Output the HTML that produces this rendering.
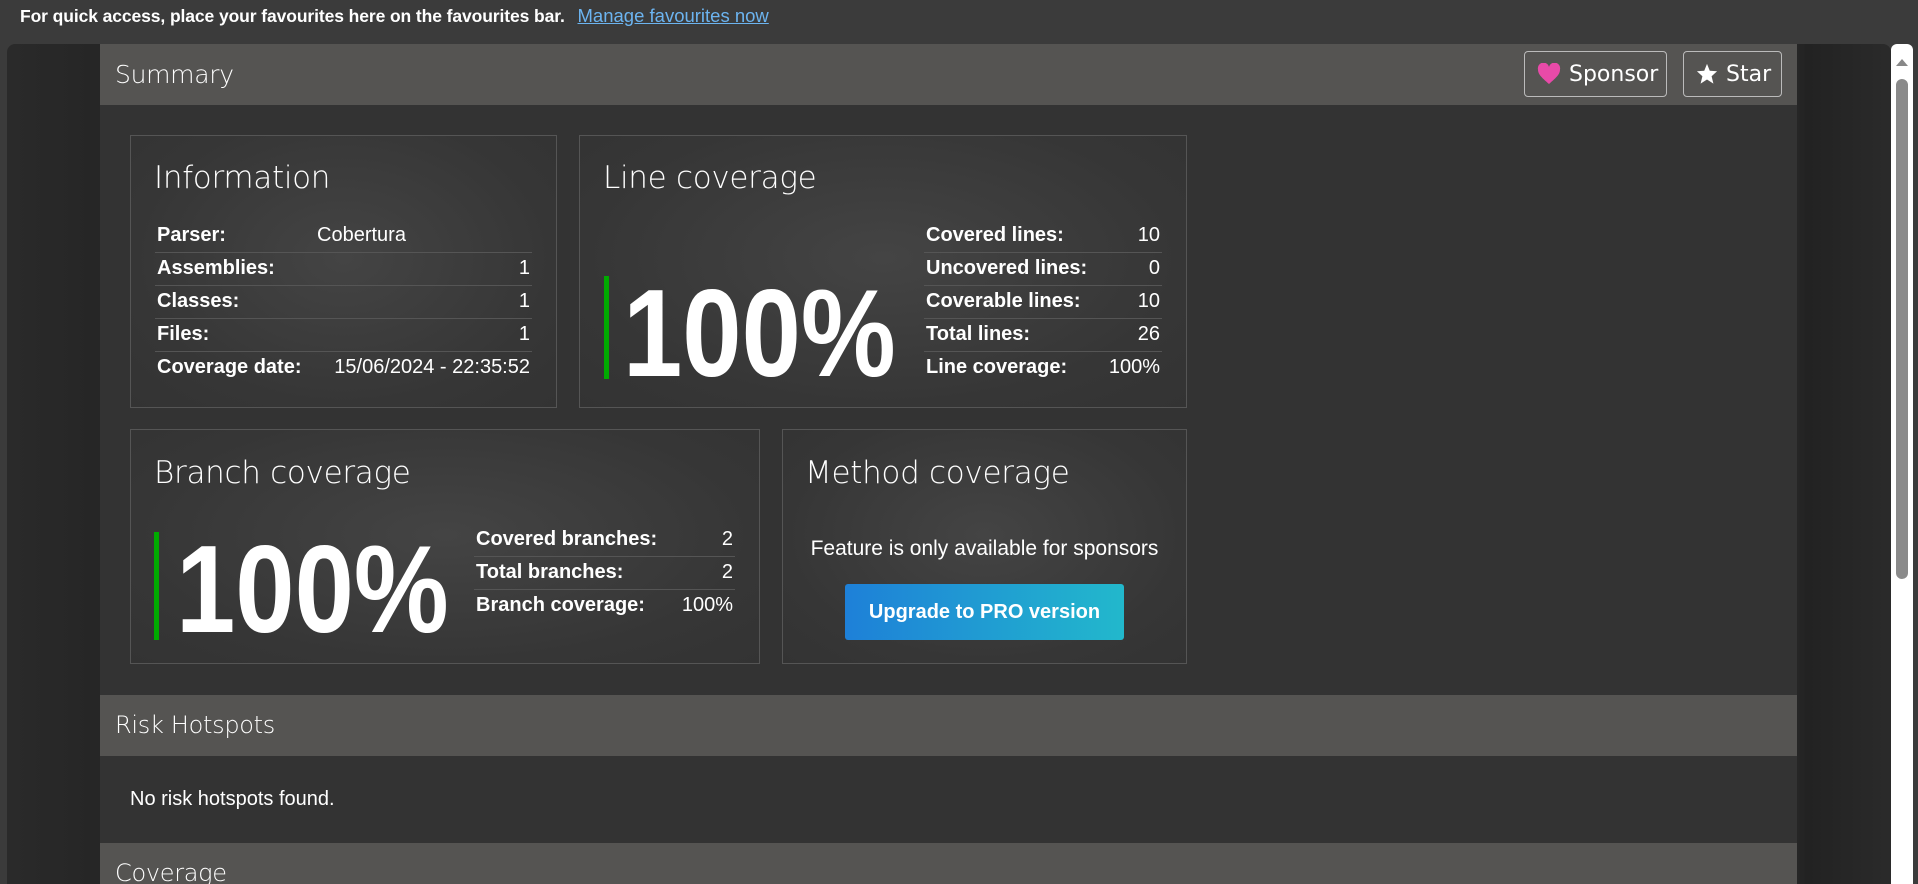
<!DOCTYPE html>
<html style="overflow:hidden"><head><meta charset="utf-8"><style>
*{margin:0;padding:0;box-sizing:border-box}
html,body{width:1918px;height:884px;overflow:hidden}
body{background:#3b3b3b;font-family:"Liberation Sans",Arial,sans-serif;color:#fff;position:relative}
.fav{position:absolute;left:20px;top:5px;font-size:17.5px;font-weight:bold;color:#fff;letter-spacing:-0.1px;white-space:nowrap}
.fav a{color:#6cb4f0;text-decoration:underline;margin-left:8px;font-weight:normal;font-size:18.5px;letter-spacing:0}
.outer{position:absolute;left:7px;top:44px;width:1884px;height:840px;background:linear-gradient(90deg,#2a2a2a 0,#262626 90px,#262626 1790px,#222 1800px,#2a2a2a 1880px);border-radius:8px 8px 0 0}
.main{position:absolute;left:100px;top:44px;width:1697px;height:840px;background:#333}
.hdr{position:absolute;left:100px;width:1697px;background:#555452;font-size:25px;padding-left:15px;font-family:"DejaVu Sans","Liberation Sans",sans-serif;font-weight:200;letter-spacing:-0.3px;overflow:hidden}
.btn{position:absolute;top:51px;height:46px;border:1px solid #bbb;border-radius:4px;font-size:22px;font-family:"DejaVu Sans",sans-serif;display:flex;align-items:center;padding-left:12px;gap:8px}
.box{position:absolute;border:1px solid #555;background:radial-gradient(ellipse at 50% 45%,#444 0,#363636 70%,#333 100%)}
.title{position:absolute;font-family:"DejaVu Sans","Liberation Sans",sans-serif;font-size:31px;font-weight:200;letter-spacing:-0.3px}
table{position:absolute;border-collapse:collapse;font-size:20px}
td{height:33px;padding:0 2px;border-top:1px solid #555;white-space:nowrap}
tr:first-child td{border-top:none}
td.l{font-weight:bold}
td.r{text-align:right}
.big{position:absolute;font-size:124px;font-weight:bold;transform:scaleX(0.86);transform-origin:left top;line-height:1}
.bar{position:absolute;width:5px;background:#0a0}
.scroll{position:absolute;left:1891px;top:44px;width:22px;height:840px;background:#fff;border-radius:6px 6px 0 0}
</style></head><body>
<div class="fav">For quick access, place your favourites here on the favourites bar. <a>Manage favourites now</a></div>
<div class="outer"></div>
<div class="main"></div>
<div class="hdr" style="top:44px;height:61px;line-height:61px">Summary</div>
<div class="btn" style="left:1524px;width:143px"><svg width="24" height="22" viewBox="0 0 24 22"><path d="M12 21 C4 14 1 11 1 6.5 A5.5 5.5 0 0 1 12 4 A5.5 5.5 0 0 1 23 6.5 C23 11 20 14 12 21Z" fill="#e84aa8"/></svg>Sponsor</div>
<div class="btn" style="left:1683px;width:99px"><svg width="22" height="22" viewBox="0 0 24 24"><path d="M12 1 L15 8.5 L23 9 L17 14.5 L19 22.5 L12 18 L5 22.5 L7 14.5 L1 9 L9 8.5Z" fill="#fff"/></svg>Star</div>

<div class="box" style="left:130px;top:135px;width:427px;height:273px"></div>
<div class="title" style="left:154px;top:160px">Information</div>
<table style="left:155px;top:219px;width:377px">
<tr><td class="l" style="width:160px">Parser:</td><td>Cobertura</td></tr>
<tr><td class="l">Assemblies:</td><td class="r">1</td></tr>
<tr><td class="l">Classes:</td><td class="r">1</td></tr>
<tr><td class="l">Files:</td><td class="r">1</td></tr>
<tr><td class="l">Coverage date:</td><td class="r">15/06/2024 - 22:35:52</td></tr>
</table>

<div class="box" style="left:579px;top:135px;width:608px;height:273px"></div>
<div class="title" style="left:603px;top:160px">Line coverage</div>
<div class="bar" style="left:604px;top:276px;height:103px"></div>
<div class="big" style="left:623px;top:272px">100%</div>
<table style="left:924px;top:219px;width:238px">
<tr><td class="l">Covered lines:</td><td class="r">10</td></tr>
<tr><td class="l">Uncovered lines:</td><td class="r">0</td></tr>
<tr><td class="l">Coverable lines:</td><td class="r">10</td></tr>
<tr><td class="l">Total lines:</td><td class="r">26</td></tr>
<tr><td class="l">Line coverage:</td><td class="r">100%</td></tr>
</table>

<div class="box" style="left:130px;top:429px;width:630px;height:235px"></div>
<div class="title" style="left:154px;top:455px">Branch coverage</div>
<div class="bar" style="left:154px;top:532px;height:108px"></div>
<div class="big" style="left:176px;top:528px">100%</div>
<table style="left:474px;top:523px;width:261px">
<tr><td class="l">Covered branches:</td><td class="r">2</td></tr>
<tr><td class="l">Total branches:</td><td class="r">2</td></tr>
<tr><td class="l">Branch coverage:</td><td class="r">100%</td></tr>
</table>

<div class="box" style="left:782px;top:429px;width:405px;height:235px"></div>
<div class="title" style="left:805px;top:455px">Method coverage</div>
<div style="position:absolute;left:782px;width:405px;top:537px;text-align:center;font-size:21px">Feature is only available for sponsors</div>
<div style="position:absolute;left:845px;top:584px;width:279px;height:56px;border-radius:3px;background:linear-gradient(90deg,#1e80d8,#22b8cc);font-weight:bold;font-size:20px;display:flex;align-items:center;justify-content:center">Upgrade to PRO version</div>

<div class="hdr" style="top:695px;height:61px;line-height:61px;font-size:24px">Risk Hotspots</div>
<div style="position:absolute;left:130px;top:788px;font-size:20px">No risk hotspots found.</div>
<div class="hdr" style="top:843px;height:41px;line-height:61px;font-size:24px">Coverage</div>

<div class="scroll"><svg width="22" height="20" style="position:absolute;top:8px"><path d="M5 14 L11 7 L17 14Z" fill="#888"/></svg><div style="position:absolute;left:5px;top:35px;width:12px;height:500px;background:#8a8a8a;border-radius:6px"></div></div>
</body></html>
